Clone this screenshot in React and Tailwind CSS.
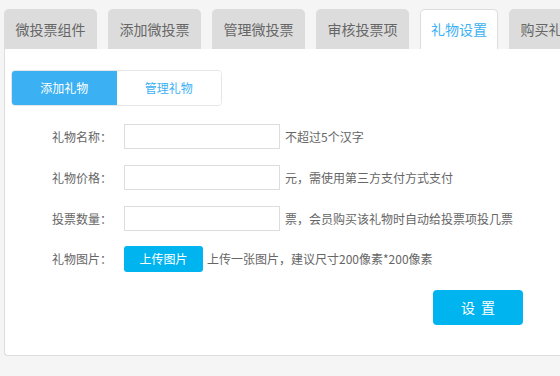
import React, { useState } from 'react';

const tabs = ['微投票组件', '添加微投票', '管理微投票', '审核投票项', '礼物设置', '购买礼物'];

const fields = [
  { label: '礼物名称：', hint: '不超过5个汉字' },
  { label: '礼物价格：', hint: '元，需使用第三方支付方式支付' },
  { label: '投票数量：', hint: '票，会员购买该礼物时自动给投票项投几票' },
];

const App = () => {
  const [activeTab, setActiveTab] = useState(4);
  const [subTab, setSubTab] = useState(0);

  return (
    <div
      className="w-[560px] h-[376px] overflow-hidden bg-[#f5f5f5]"
      style={{ fontFamily: '"Microsoft YaHei", "Noto Sans CJK SC", "Noto Sans", sans-serif' }}
    >
      {/* Top tabs */}
      <div className="flex gap-[11px] pl-[4px] pt-[9px] whitespace-nowrap">
        {tabs.map((tab, i) => (
          <button
            key={tab}
            onClick={() => setActiveTab(i)}
            className={
              i === activeTab
                ? 'shrink-0 h-[40px] px-[10px] rounded-t-[5px] border border-b-0 border-[#dddddd] bg-white text-[14px] text-[#3bb0f3]'
                : 'shrink-0 h-[40px] px-[11.5px] rounded-t-[5px] bg-[#dcdcdc] text-[14px] text-[#666666]'
            }
          >
            {tab}
          </button>
        ))}
      </div>

      {/* Panel */}
      <div className="ml-[4px] w-[600px] h-[307px] bg-white border-l border-b border-[#dddddd] rounded-bl-[4px] pt-[21px] pl-[6px]">
        {/* Sub tabs */}
        <div className="flex w-[211px] h-[36px] border border-[#e6e6e6] rounded-[4px] overflow-hidden">
          {['添加礼物', '管理礼物'].map((t, i) => (
            <button
              key={t}
              onClick={() => setSubTab(i)}
              className={
                i === subTab
                  ? 'w-[105px] h-full bg-[#3bb0f3] text-white text-[12px]'
                  : 'w-[105px] h-full bg-white text-[#3bb0f3] text-[12px]'
              }
            >
              {t}
            </button>
          ))}
        </div>

        {/* Form */}
        <div className="mt-[18px] flex flex-col gap-[16px]">
          {fields.map((f) => (
            <div key={f.label} className="flex items-center h-[25px]">
              <label className="w-[101px] text-right text-[12px] text-[#666666]">{f.label}</label>
              <input
                type="text"
                className="ml-[12px] w-[156px] h-[25px] border border-[#dddddd] outline-none px-1 text-[12px]"
              />
              <span className="ml-[5px] text-[12px] text-[#666666]">{f.hint}</span>
            </div>
          ))}
          <div className="flex items-center h-[26px] -mt-[1px]">
            <label className="w-[101px] text-right text-[12px] text-[#666666]">礼物图片：</label>
            <button className="ml-[12px] w-[79px] h-[26px] rounded-[3px] bg-[#00b4ef] text-white text-[12px]">
              上传图片
            </button>
            <span className="ml-[4px] text-[12px] text-[#666666]">上传一张图片，建议尺寸200像素*200像素</span>
          </div>
        </div>

        {/* Submit */}
        <div className="mt-[18px] pl-[422px]">
          <button className="w-[90px] h-[35px] rounded-[4px] bg-[#00b4ef] text-white text-[14px] tracking-[6px] pl-[6px]">
            设置
          </button>
        </div>
      </div>
    </div>
  );
};

export default App;
